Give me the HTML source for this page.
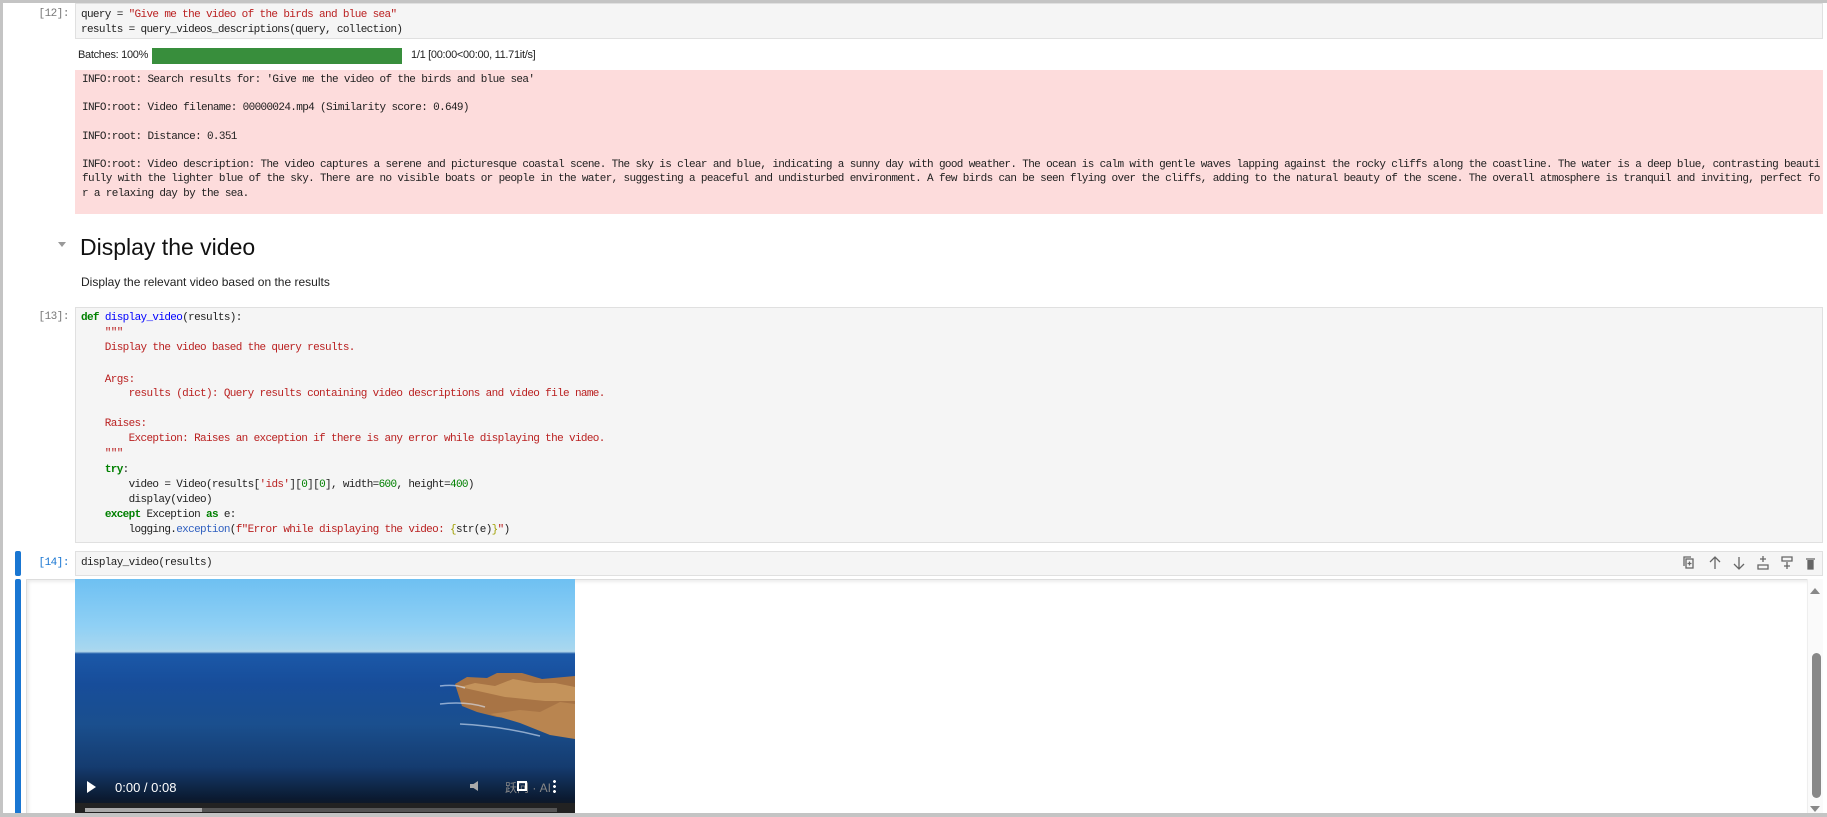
<!DOCTYPE html>
<html><head><meta charset="utf-8"><style>
*{margin:0;padding:0;box-sizing:border-box}
body{width:1827px;height:817px;overflow:hidden;background:#fff;position:relative;font-family:"Liberation Sans",sans-serif}
.abs{position:absolute}
.mono{font-family:"Liberation Mono",monospace;font-size:11px;letter-spacing:-0.65px;white-space:pre;color:#212121}
.cl{position:absolute;left:81px;font-family:"Liberation Mono",monospace;font-size:11px;letter-spacing:-0.65px;white-space:pre;color:#212121;line-height:14px}
.prompt{font-family:"Liberation Mono",monospace;font-size:11px;color:#777;letter-spacing:-0.5px;text-align:right;width:50px}
.cell{background:#f5f5f5;border:1px solid #e0e0e0}
.k{color:#008000;font-weight:bold}.s{color:#ba2121}.n{color:#008000}.f{color:#0000ff}
.sv{color:#a0a000}
</style></head><body>
<div class="abs" style="left:0;top:0;width:3px;height:817px;background:#c4c4c4"></div>
<div class="abs" style="left:0;top:0;width:1827px;height:3px;background:#c4c4c4"></div>

<!-- cell 12 -->
<div class="abs prompt" style="left:19px;top:8px">[12]:</div>
<div class="abs cell" style="left:75px;top:3px;width:1748px;height:36px"></div>
<div class="abs mono" style="left:81px;top:8px;line-height:14.5px">query = <span class="s">"Give me the video of the birds and blue sea"</span>
results = query_videos_descriptions(query, collection)</div>

<div class="abs" style="left:78px;top:49px;font-size:11px;color:#222;letter-spacing:-0.3px">Batches: 100%</div>
<div class="abs" style="left:152px;top:48px;width:250px;height:16px;background:#388e3c"></div>
<div class="abs" style="left:411px;top:49px;font-size:11px;color:#222;letter-spacing:-0.3px">1/1 [00:00&lt;00:00, 11.71it/s]</div>

<div class="abs" style="left:75px;top:70px;width:1748px;height:144px;background:#fddcdc"></div>
<div class="abs mono" style="left:82px;top:73px;line-height:14.2px">INFO:root: Search results for: 'Give me the video of the birds and blue sea'

INFO:root: Video filename: 00000024.mp4 (Similarity score: 0.649)

INFO:root: Distance: 0.351

INFO:root: Video description: The video captures a serene and picturesque coastal scene. The sky is clear and blue, indicating a sunny day with good weather. The ocean is calm with gentle waves lapping against the rocky cliffs along the coastline. The water is a deep blue, contrasting beauti
fully with the lighter blue of the sky. There are no visible boats or people in the water, suggesting a peaceful and undisturbed environment. A few birds can be seen flying over the cliffs, adding to the natural beauty of the scene. The overall atmosphere is tranquil and inviting, perfect fo
r a relaxing day by the sea.</div>

<!-- heading -->
<div class="abs" style="left:58px;top:242px;width:0;height:0;border-left:4px solid transparent;border-right:4px solid transparent;border-top:5px solid #999"></div>
<div class="abs" style="left:80px;top:234px;font-size:23px;color:#111">Display the video</div>
<div class="abs" style="left:81px;top:275px;font-size:12px;color:#222">Display the relevant video based on the results</div>

<!-- cell 13 -->
<div class="abs prompt" style="left:19px;top:311px">[13]:</div>
<div class="abs cell" style="left:75px;top:307px;width:1748px;height:236px"></div>
<div class="cl" style="top:311px"><span class="k">def</span> <span class="f">display_video</span>(results):</div>
<div class="cl" style="top:326px"><span class="s">    """</span></div>
<div class="cl" style="top:341px"><span class="s">    Display the video based the query results.</span></div>
<div class="cl" style="top:373px"><span class="s">    Args:</span></div>
<div class="cl" style="top:387px"><span class="s">        results (dict): Query results containing video descriptions and video file name.</span></div>
<div class="cl" style="top:417px"><span class="s">    Raises:</span></div>
<div class="cl" style="top:432px"><span class="s">        Exception: Raises an exception if there is any error while displaying the video.</span></div>
<div class="cl" style="top:447px"><span class="s">    """</span></div>
<div class="cl" style="top:463px">    <span class="k">try</span>:</div>
<div class="cl" style="top:478px">        video = Video(results[<span class="s">'ids'</span>][<span class="n">0</span>][<span class="n">0</span>], width=<span class="n">600</span>, height=<span class="n">400</span>)</div>
<div class="cl" style="top:493px">        display(video)</div>
<div class="cl" style="top:508px">    <span class="k">except</span> Exception <span class="k">as</span> e:</div>
<div class="cl" style="top:523px">        logging.<span style="color:#3060c0">exception</span>(<span class="s">f"Error while displaying the video: </span><span class="sv">{</span>str(e)<span class="sv">}</span><span class="s">"</span>)</div>

<!-- cell 14 -->
<div class="abs" style="left:15px;top:551px;width:6px;height:25px;background:#1976d2;border-radius:2px"></div>
<div class="abs prompt" style="left:19px;top:557px;color:#1976d2">[14]:</div>
<div class="abs cell" style="left:75px;top:551px;width:1748px;height:25px"></div>
<div class="abs mono" style="left:81px;top:557px">display_video(results)</div>
<svg class="abs" style="left:1680px;top:554px" width="140" height="18" viewBox="0 0 140 18" fill="none" stroke="#666" stroke-width="1.3">
<rect x="6" y="5" width="7" height="9"/><path d="M4 12V3h7"/><path d="M9.5 7.5v4M7.5 9.5h4"/>
<path d="M35 15V3M30 8l5-5 5 5"/>
<path d="M59 3v12M54 10l5 5 5-5"/>
<path d="M78 15h10v-4H78zM83 2v6M80 5h6"/>
<path d="M102 3h10v4h-10zM107 8v7M104 12h6"/>
<path d="M126 5h9M128 6v9h5V6" fill="#666"/>
</svg>

<!-- output -->
<div class="abs" style="left:15px;top:579px;width:6px;height:238px;background:#1976d2;border-radius:2px"></div>
<div class="abs" style="left:26px;top:579px;width:1781px;height:238px;border-left:1px solid #ddd;border-top:1px solid #ddd;box-shadow:inset 2px 2px 3px rgba(0,0,0,0.08)"></div>
<div class="abs" style="left:75px;top:579px;width:500px;height:234px;overflow:hidden;background:linear-gradient(#6ec0f2 0%,#8fd0f5 20%,#a8d7ef 30%,#b3d8ec 31%,#1b58a8 32%,#174d9a 45%,#1a4f8e 62%,#153c70 80%,#0b1a30 94%,#151515 100%)">
<svg class="abs" style="left:0;top:0" width="500" height="234">
<path d="M380 105 l12-7 20 1 10-5 25 0 20 6 33 -3 V155 l-20 -6 -30 -8 -28 -3 -20 -5 -15 -6z" fill="#a87445"/>
<path d="M385 108 l15-4 20 3 18 -7 22 4 20 0 20 4V122l-30 0 -40 -4z" fill="#c9995f" opacity=".85"/>
<path d="M415 135 l30-4 20 2 20-10 15 2V160 l-25 -4 -30 -12z" fill="#b98550"/>
<path d="M365 125 q25 -3 45 3 M385 145 q40 2 80 12 M365 107 q15 -2 25 2" stroke="#dce8f8" stroke-width="1.5" fill="none" opacity=".6"/>
</svg>
<svg class="abs" style="left:12px;top:202px" width="10" height="12"><path d="M0 0L9 6L0 12z" fill="#fff"/></svg>
<div class="abs" style="left:40px;top:201px;color:#fff;font-size:13px">0:00 / 0:08</div>
<div class="abs" style="left:395px;top:202px;width:10px;height:10px;background:#aaa;clip-path:polygon(0 30%,35% 30%,80% 0,80% 100%,35% 70%,0 70%)"></div>
<div class="abs" style="left:430px;top:200px;color:#888;font-size:12px;font-family:'Liberation Sans','Noto Sans CJK SC',sans-serif">跃问 · AI</div>
<div class="abs" style="left:442px;top:202px;width:10px;height:10px;border:2px dashed #fff"></div>
<div class="abs" style="left:478px;top:200px;width:3px;height:14px;background:radial-gradient(circle,#fff 1.3px,transparent 1.6px) 0 0/3px 5px"></div>
<div class="abs" style="left:0;top:224px;width:500px;height:10px;background:#222"></div>
<div class="abs" style="left:10px;top:229px;width:472px;height:4px;background:#555"></div>
<div class="abs" style="left:10px;top:229px;width:117px;height:4px;background:#aaa"></div>
</div>

<!-- scrollbar -->
<div class="abs" style="left:1807px;top:579px;width:16px;height:238px;background:#fafafa;border-left:1px solid #eee"></div>
<div class="abs" style="left:1810px;top:588px;width:0;height:0;border-left:5px solid transparent;border-right:5px solid transparent;border-bottom:6px solid #888"></div>
<div class="abs" style="left:1812px;top:653px;width:9px;height:145px;background:#888;border-radius:5px"></div>
<div class="abs" style="left:1810px;top:806px;width:0;height:0;border-left:5px solid transparent;border-right:5px solid transparent;border-top:6px solid #888"></div>
<div class="abs" style="left:0;top:813px;width:1827px;height:4px;background:#c4c4c4"></div>
</body></html>
